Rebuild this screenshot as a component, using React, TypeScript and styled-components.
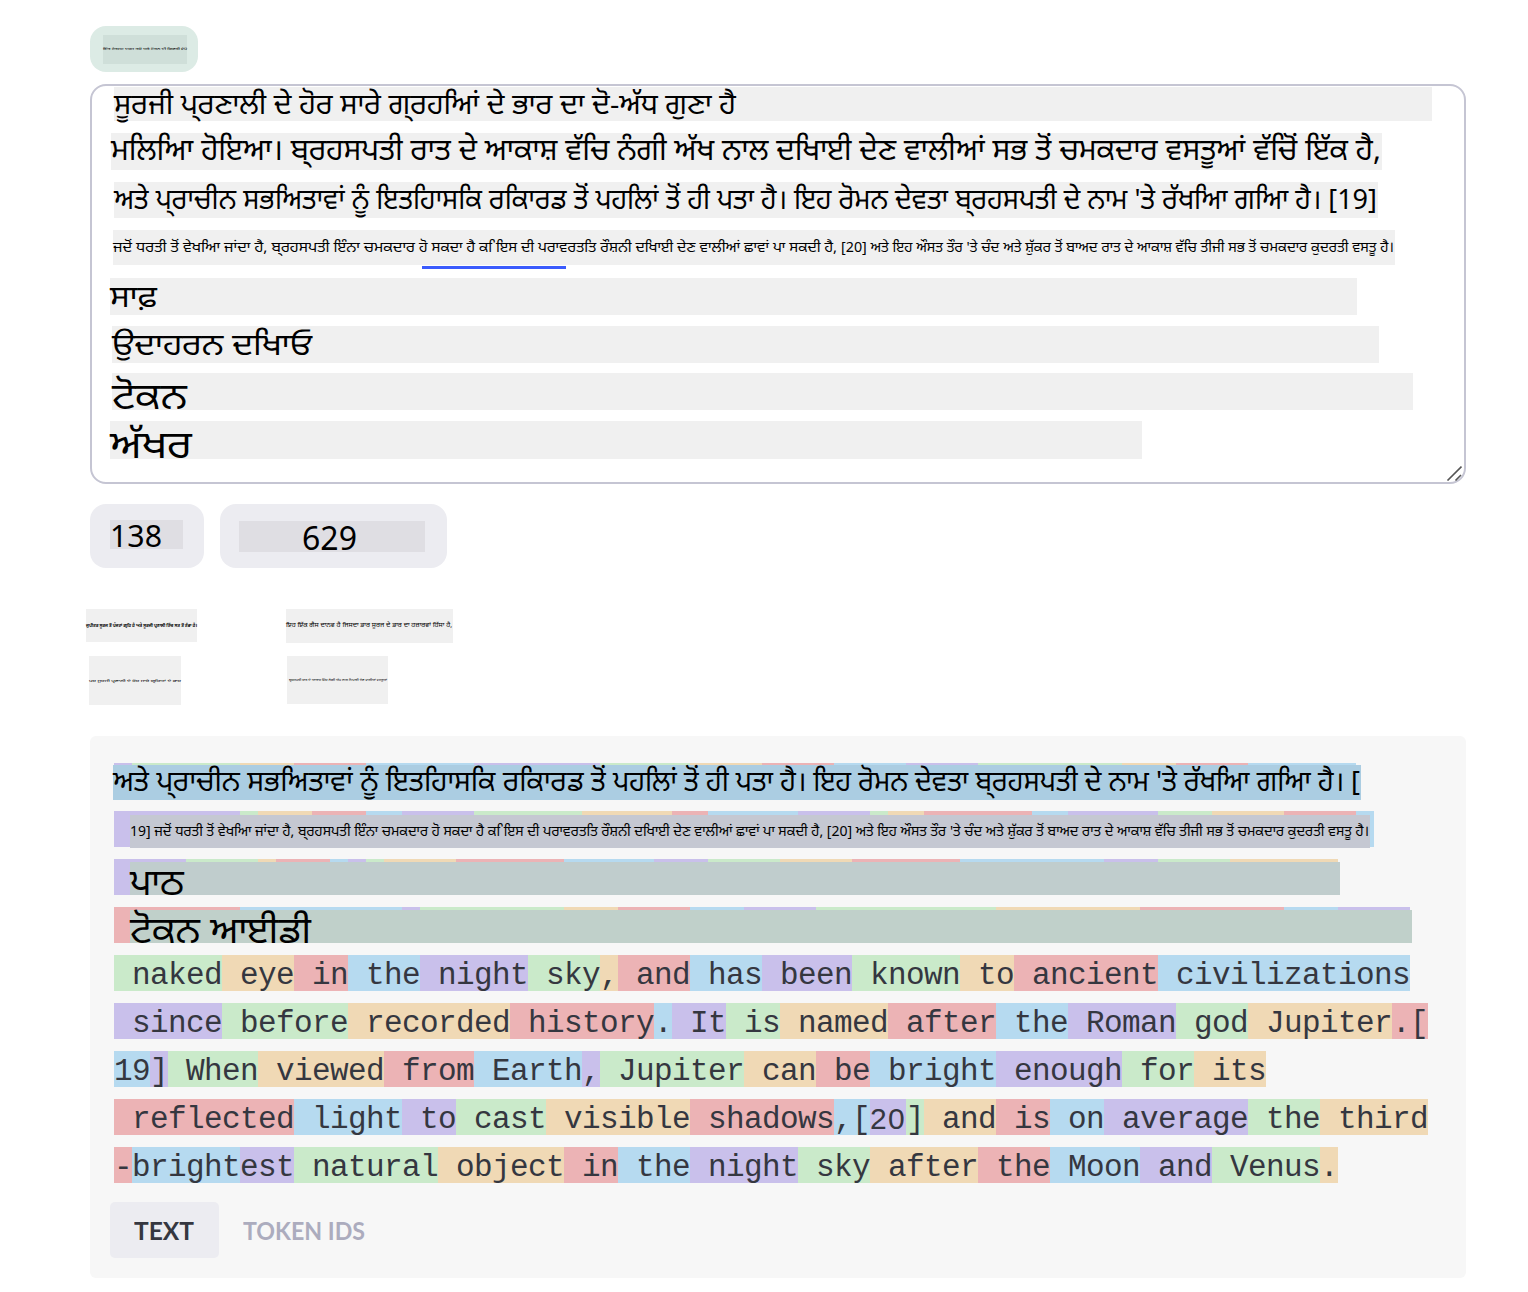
import React, { useLayoutEffect, useRef } from "react";
import styled, { createGlobalStyle } from "styled-components";

const GlobalStyle = createGlobalStyle`
  * { box-sizing: border-box; }
  body { margin: 0; background: #fff; }
`;

const gurmukhi = `"Noto Sans", "Noto Sans Gurmukhi", "Open Sans", sans-serif`;

const Page = styled.main`
  width: 1528px;
  height: 1292px;
  padding: 26px 62px 0 90px;
  overflow: hidden;
  display: flex;
  flex-direction: column;
  align-items: stretch;
  font-family: ${gurmukhi};
  color: #000;
`;

const Badge = styled.div`
  align-self: flex-start;
  width: 108px;
  height: 46px;
  padding: 9px 0 0 13px;
  border-radius: 16px;
  background: #dcebe5;
`;

const Editor = styled.section`
  position: relative;
  height: 400px;
  margin-top: 12px;
  border: 2px solid #c5c5d3;
  border-radius: 16px;
  display: flex;
  flex-direction: column;
  flex: none;
`;

const Strip = styled.div<{ $w: number; $h: number; $bg?: string; $left?: number; $top?: number }>`
  display: flex;
  align-items: flex-start;
  flex: none;
  width: ${(p) => p.$w}px;
  height: ${(p) => p.$h}px;
  margin-left: ${(p) => p.$left ?? 0}px;
  margin-top: ${(p) => p.$top ?? 0}px;
  background: ${(p) => p.$bg ?? "#f0f0f0"};
  white-space: nowrap;
`;

const Slot = styled.span<{ $w: number; $shift: number; $indent: number }>`
  display: block;
  flex: none;
  width: ${(p) => p.$w}px;
  height: 32px;
  margin-top: ${(p) => p.$shift}px;
  margin-left: ${(p) => p.$indent}px;
`;

const Line = styled.span<{ $size: number; $weight: number }>`
  display: inline-block;
  vertical-align: top;
  height: 40px;
  line-height: 40px;
  font-size: ${(p) => p.$size}px;
  font-weight: ${(p) => p.$weight};
  transform-origin: 0 50%;
  white-space: pre;
`;

type FitProps = { size: number; width: number; shift?: number; indent?: number; weight?: number; children: string };

function Fit({ size, width, shift = 0, indent = 0, weight = 400, children }: FitProps) {
  const ref = useRef<HTMLSpanElement>(null);
  useLayoutEffect(() => {
    const el = ref.current;
    if (el && el.offsetWidth) el.style.transform = `scaleX(${width / el.getBoundingClientRect().width})`;
  }, []);
  return (
    <Slot $w={width} $shift={shift} $indent={indent}>
      <Line ref={ref} $size={size} $weight={weight}>
        {children}
      </Line>
    </Slot>
  );
}

const Underline = styled.i`
  position: absolute;
  left: 330px;
  top: 180px;
  width: 144px;
  height: 3px;
  background: #3b5bfd;
`;

const Grip = styled.svg`
  position: absolute;
  right: 2px;
  bottom: 1px;
`;

const Counters = styled.div`
  display: flex;
  gap: 16px;
  margin-top: 20px;
`;

const Counter = styled.div<{ $w: number; $pad: string }>`
  width: ${(p) => p.$w}px;
  height: 64px;
  padding: ${(p) => p.$pad};
  border-radius: 16px;
  background: #ececf1;
`;

const Notes = styled.div`
  display: grid;
  grid-template-columns: 200px 200px;
  grid-template-rows: 47px 50px;
  margin: 41px 0 0 -4px;
`;

const Panel = styled.section`
  height: 542px;
  flex: none;
  margin-top: 30px;
  padding: 27px 0 0 24px;
  border-radius: 6px;
  background: #f7f7f7;
`;

const TokenRow = styled.div`
  display: grid;
  height: 36px;
  margin-bottom: 12px;
  > * { grid-area: 1 / 1; }
`;

const Tokens = styled.div`
  display: flex;
  height: 36px;
  font: 31px/42px "Liberation Mono", monospace;
  letter-spacing: -0.603px;
  color: #353740;
`;

const Token = styled.span<{ $c: string; $n: number; $plain?: boolean }>`
  flex: none;
  width: ${(p) => p.$n * 18}px;
  height: 36px;
  background: ${(p) => p.$c};
  white-space: pre;
  ${(p) => p.$plain && `font-family: "Liberation Sans", sans-serif; font-size: 30px; line-height: 40px; letter-spacing: 1.3px;`}
`;

const Tabs = styled.div`
  display: flex;
  margin: 19px 0 0 -4px;
`;

const Tab = styled.button<{ $active?: boolean; $w: number }>`
  display: flex;
  align-items: flex-start;
  width: ${(p) => p.$w}px;
  height: 56px;
  padding: 9px 0 0 24px;
  border: 0;
  border-radius: 5px;
  text-align: left;
  background: ${(p) => (p.$active ? "#ececf1" : "transparent")};
  color: ${(p) => (p.$active ? "#353740" : "#acacbe")};
  font-family: Lato, sans-serif;
`;

const P = "#c9c0eb";
const G = "#caeaca";
const O = "#f0d9b5";
const R = "#ecb3b5";
const B = "#b6daf0";
const cycle = [P, G, O, R, B];

type Segment = [string, number];

const covered: {
  start: number; cells: number[]; w: number; h: number; left: number; top: number;
  bg: string; text: Segment[]; size: number; shift: number;
}[] = [
  { start: 0, cells: [1, 6, 3, 4, 6, 7, 5, 4, 4, 4, 4, 8, 3, 4, 6], w: 1248, h: 35, left: -1, top: 2, bg: "#abcde2",
    text: [
      ["ਅਤੇ ਪ੍‌ਰਾਚੀਨ ਸਭਅਿਤਾਵਾਂ ਨੂੰ ਇਤਹਿਾਸਕਿ ਰਕਿਾਰਡ ", 478],
      ["ਤੋਂ ਪਹਲਿਾਂ ਤੋਂ ", 115],
      ["ਹੀ ਪਤਾ ਹੈ। ਇਹ ਰੋਮਨ ਦੇਵਤਾ ਬ੍‌ਰਹਸਪਤੀ ਦੇ ਨਾਮ 'ਤੇ ਰੱਖਆਿ ਗਆਿ ਹੈ। [", 654],
    ], size: 28, shift: -5 },
  { start: 0, cells: [7, 1, 3, 3, 2, 4, 6, 5, 2, 5, 4, 1, 2, 6, 2, 5, 3, 4, 4, 1], w: 1240, h: 33, left: 16, top: 4, bg: "#c5c8d2",
    text: [["19] ਜਦੋਂ ਧਰਤੀ ਤੋਂ ਵੇਖਆਿ ਜਾਂਦਾ ਹੈ, ਬ੍‌ਰਹਸਪਤੀ ਇੰਨਾ ਚਮਕਦਾਰ ਹੋ ਸਕਦਾ ਹੈ ਕ\u00a0ਿਇਸ ਦੀ ਪਰਾਵਰਤਤਿ ਰੌਸ਼ਨੀ ਦਖਿਾਈ ਦੇਣ ਵਾਲੀਆਂ ਛਾਵਾਂ ਪਾ ਸਕਦੀ ਹੈ, [20] ਅਤੇ ਇਹ ਔਸਤ ਤੌਰ 'ਤੇ ਚੰਦ ਅਤੇ ਸ਼ੁੱਕਰ ਤੋਂ ਬਾਅਦ ਰਾਤ ਦੇ ਆਕਾਸ਼ ਵੱਚਿ ਤੀਜੀ ਸਭ ਤੋਂ ਚਮਕਦਾਰ ਕੁਦਰਤੀ ਵਸਤੂ ਹੈ।", 1239]],
    size: 15, shift: -5 },
  { start: 0, cells: [4, 4, 1, 3, 1, 1, 1, 4, 6, 5, 3, 4, 4, 6, 8, 3, 4, 6], w: 1210, h: 33, left: 16, top: 3, bg: "#c0cdcd",
    text: [["ਪਾਠ", 54]], size: 36, shift: 0 },
  { start: 3, cells: [7, 9, 1, 8, 3, 4, 3, 4, 10, 8, 8, 3, 4], w: 1282, h: 33, left: 16, top: 3, bg: "#c0d0ca",
    text: [["ਟੋਕਨ ਆਈਡੀ", 181]], size: 36, shift: 0 },
];

const rows: [number, string[]][] = [
  [1, [" naked", " eye", " in", " the", " night", " sky", ",", " and", " has", " been", " known", " to", " ancient", " civilizations"]],
  [0, [" since", " before", " recorded", " history", ".", " It", " is", " named", " after", " the", " Roman", " god", " Jupiter", ".["]],
  [4, ["19", "]", " When", " viewed", " from", " Earth", ",", " Jupiter", " can", " be", " bright", " enough", " for", " its"]],
  [3, [" reflected", " light", " to", " cast", " visible", " shadows", ",[", "20", "]", " and", " is", " on", " average", " the", " third"]],
  [3, ["-", "bright", "est", " natural", " object", " in", " the", " night", " sky", " after", " the", " Moon", " and", " Venus", "."]],
];

export default function App() {
  return (
    <>
      <GlobalStyle />
      <Page>
        <Badge>
          <Strip $w={84} $h={29} $bg="#cfdfd9">
            <Fit size={3} width={84} shift={-6}>ਇੱਕ ਟੈਕਸਟ ਦਰਜ ਕਰੋ ਅਤੇ ਟੋਕਨ ਦੀ ਗਿਣਤੀ ਵੇਖੋ</Fit>
          </Strip>
        </Badge>
        <Editor>
          <Strip $w={1318} $h={34} $left={22} $top={1}>
            <Fit size={28} width={622} shift={-4}>ਸੂਰਜੀ ਪ੍‌ਰਣਾਲੀ ਦੇ ਹੋਰ ਸਾਰੇ ਗ੍‌ਰਹਆਿਂ ਦੇ ਭਾਰ ਦਾ ਦੋ-ਅੱਧ ਗੁਣਾ ਹੈ</Fit>
          </Strip>
          <Strip $w={1271} $h={37} $left={19} $top={12}>
            <Fit size={30} width={1270} shift={-4}>ਮਲਿਆਿ ਹੋਇਆ। ਬ੍‌ਰਹਸਪਤੀ ਰਾਤ ਦੇ ਆਕਾਸ਼ ਵੱਚਿ ਨੰਗੀ ਅੱਖ ਨਾਲ ਦਖਿਾਈ ਦੇਣ ਵਾਲੀਆਂ ਸਭ ਤੋਂ ਚਮਕਦਾਰ ਵਸਤੂਆਂ ਵੱਚਿੋਂ ਇੱਕ ਹੈ,</Fit>
          </Strip>
          <Strip $w={1264} $h={36} $left={22} $top={12}>
            <Fit size={28} width={1263} shift={-4}>ਅਤੇ ਪ੍‌ਰਾਚੀਨ ਸਭਅਿਤਾਵਾਂ ਨੂੰ ਇਤਹਿਾਸਕਿ ਰਕਿਾਰਡ ਤੋਂ ਪਹਲਿਾਂ ਤੋਂ ਹੀ ਪਤਾ ਹੈ। ਇਹ ਰੋਮਨ ਦੇਵਤਾ ਬ੍‌ਰਹਸਪਤੀ ਦੇ ਨਾਮ 'ਤੇ ਰੱਖਆਿ ਗਆਿ ਹੈ। [19]</Fit>
          </Strip>
          <Strip $w={1282} $h={35} $left={21} $top={12}>
            <Fit size={15} width={306} shift={-4}>{"ਜਦੋਂ ਧਰਤੀ ਤੋਂ ਵੇਖਆਿ ਜਾਂਦਾ ਹੈ, ਬ੍‌ਰਹਸਪਤੀ ਇੰਨਾ ਚਮਕਦਾਰ "}</Fit>
            <Fit size={15} width={422} shift={-4}>{"ਹੋ ਸਕਦਾ ਹੈ ਕ\u00a0ਿਇਸ ਦੀ ਪਰਾਵਰਤਤਿ ਰੌਸ਼ਨੀ ਦਖਿਾਈ ਦੇਣ ਵਾਲੀਆਂ ਛਾਵਾਂ ਪਾ ਸਕਦੀ ਹੈ, "}</Fit>
            <Fit size={15} width={553} shift={-4}>{"[20] ਅਤੇ ਇਹ ਔਸਤ ਤੌਰ 'ਤੇ ਚੰਦ ਅਤੇ ਸ਼ੁੱਕਰ ਤੋਂ ਬਾਅਦ ਰਾਤ ਦੇ ਆਕਾਸ਼ ਵੱਚਿ ਤੀਜੀ ਸਭ ਤੋਂ ਚਮਕਦਾਰ ਕੁਦਰਤੀ ਵਸਤੂ ਹੈ।"}</Fit>
          </Strip>
          <Strip $w={1247} $h={37} $left={18} $top={13}>
            <Fit size={30} width={47} shift={-2}>ਸਾਫ਼</Fit>
          </Strip>
          <Strip $w={1267} $h={37} $left={20} $top={11}>
            <Fit size={31} width={200} shift={-3}>ਉਦਾਹਰਨ ਦਖਿਾਓ</Fit>
          </Strip>
          <Strip $w={1301} $h={37} $left={20} $top={10}>
            <Fit size={37} width={75} shift={2}>ਟੋਕਨ</Fit>
          </Strip>
          <Strip $w={1032} $h={38} $left={18} $top={11}>
            <Fit size={38} width={82} shift={2}>ਅੱਖਰ</Fit>
          </Strip>
          <Underline />
          <Grip width="16" height="16" viewBox="0 0 16 16" fill="none" stroke="#555" strokeWidth="1.6">
            <path d="M1.5 15.5l14-14M9.500 15.500l5.500-5.500" />
          </Grip>
        </Editor>
        <Counters>
          <Counter $w={114} $pad="16px 0 0 20px">
            <Strip $w={73} $h={29} $bg="#dfdee3"><Fit size={30} width={52} shift={-4}>138</Fit></Strip>
          </Counter>
          <Counter $w={227} $pad="17px 0 0 19px">
            <Strip $w={186} $h={31} $bg="#dfdee3"><Fit size={32} width={55} indent={63} shift={-3}>629</Fit></Strip>
          </Counter>
        </Counters>
        <Notes>
          <Strip $w={111} $h={33}><Fit size={5} width={111} shift={-4} weight={700}>ਜੁਪੀਟਰ ਸੂਰਜ ਤੋਂ ਪੰਜਵਾਂ ਗ੍ਰਹਿ ਹੈ ਅਤੇ ਸੂਰਜੀ ਪ੍ਰਣਾਲੀ ਵਿੱਚ ਸਭ ਤੋਂ ਵੱਡਾ ਹੈ।</Fit></Strip>
          <Strip $w={167} $h={34}><Fit size={7} width={166} shift={-4}>ਇਹ ਇੱਕ ਗੈਸ ਦਾਨਵ ਹੈ ਜਿਸਦਾ ਭਾਰ ਸੂਰਜ ਦੇ ਭਾਰ ਦਾ ਹਜ਼ਾਰਵਾਂ ਹਿੱਸਾ ਹੈ,</Fit></Strip>
          <Strip $w={92} $h={49} $left={3}><Fit size={3} width={92} shift={5}>ਪਰ ਸੂਰਜੀ ਪ੍ਰਣਾਲੀ ਦੇ ਹੋਰ ਸਾਰੇ ਗ੍ਰਹਿਆਂ ਦੇ ਭਾਰ</Fit></Strip>
          <Strip $w={101} $h={48} $left={1}><Fit size={3} width={98} indent={2} shift={4}>ਬ੍ਰਹਸਪਤੀ ਰਾਤ ਦੇ ਆਕਾਸ਼ ਵਿੱਚ ਨੰਗੀ ਅੱਖ ਨਾਲ ਦਿਖਾਈ ਦੇਣ ਵਾਲੀਆਂ ਵਸਤੂਆਂ</Fit></Strip>
        </Notes>
        <Panel>
          {covered.map((r, i) => (
            <TokenRow key={i}>
              <Tokens>
                {r.cells.map((n, j) => <Token key={j} $c={cycle[(r.start + j) % 5]} $n={n} />)}
              </Tokens>
              <Strip $w={r.w} $h={r.h} $left={r.left} $top={r.top} $bg={r.bg}>
                {r.text.map(([text, width]) => (
                  <Fit key={text} size={r.size} width={width} shift={r.shift}>{text}</Fit>
                ))}
              </Strip>
            </TokenRow>
          ))}
          {rows.map(([start, words], i) => (
            <TokenRow key={i}>
              <Tokens>
                {words.map((t, j) => (
                  <Token key={j} $c={cycle[(start + j) % 5]} $n={t.length} $plain={t === "20"}>{t}</Token>
                ))}
              </Tokens>
            </TokenRow>
          ))}
          <Tabs>
            <Tab $active $w={109}><Fit size={24} width={60} weight={700}>TEXT</Fit></Tab>
            <Tab $w={170}><Fit size={24} width={122} weight={700}>TOKEN IDS</Fit></Tab>
          </Tabs>
        </Panel>
      </Page>
    </>
  );
}
